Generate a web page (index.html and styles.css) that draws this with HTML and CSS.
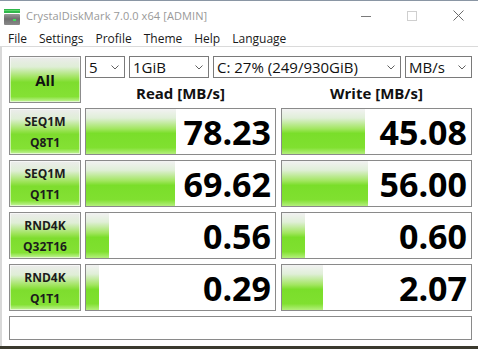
FILE: index.html
```html
<!DOCTYPE html>
<html lang="en">
<head>
  <meta charset="UTF-8" />
  <title>CrystalDiskMark 7.0.0 x64 [ADMIN]</title>
  <link rel="stylesheet" href="styles.css">
</head>
<body>
  <div class="window">
    <div class="titlebar">
      <svg class="app-icon" width="16" height="16" viewBox="0 0 16 16">
        <defs>
          <linearGradient id="drive" x1="0" y1="0" x2="0" y2="1">
            <stop offset="0" stop-color="#9a9a9a"/>
            <stop offset="0.45" stop-color="#6e6e6e"/>
            <stop offset="1" stop-color="#8a8a8a"/>
          </linearGradient>
        </defs>
        <rect x="0" y="0" width="16" height="4" fill="#2fb84a"/>
        <rect x="0" y="1" width="16" height="1" fill="#5fd46e"/>
        <rect x="0" y="5" width="16" height="11" rx="1" fill="url(#drive)"/>
        <rect x="9" y="10" width="3" height="2" fill="#3ee05a"/>
      </svg>
      <span class="title">CrystalDiskMark 7.0.0 x64 [ADMIN]</span>
      <div class="controls">
        <span class="ctl">
          <svg width="10" height="10" viewBox="0 0 10 10"><line x1="0" y1="5.5" x2="10" y2="5.5" stroke="#7a7a7a"/></svg>
        </span>
        <span class="ctl">
          <svg width="10" height="10" viewBox="0 0 10 10"><rect x="0.5" y="0.5" width="9" height="9" fill="none" stroke="#cfcfcf"/></svg>
        </span>
        <span class="ctl">
          <svg width="11" height="11" viewBox="0 0 11 11"><path d="M0.5 0.5 L10.5 10.5 M10.5 0.5 L0.5 10.5" stroke="#6a6a6a" fill="none"/></svg>
        </span>
      </div>
    </div>

    <nav class="menu">
      <span>File</span>
      <span>Settings</span>
      <span>Profile</span>
      <span>Theme</span>
      <span>Help</span>
      <span>Language</span>
    </nav>

    <main class="client">
      <div class="board">
        <div class="label all">All</div>
        <div class="settings">
          <div class="combos">
            <div class="combo count">5<svg class="chev" width="8" height="5" viewBox="0 0 8 5"><polyline points="0.5,0.5 4,4 7.5,0.5" fill="none" stroke="#606060"/></svg></div>
            <div class="combo size">1GiB<svg class="chev" width="8" height="5" viewBox="0 0 8 5"><polyline points="0.5,0.5 4,4 7.5,0.5" fill="none" stroke="#606060"/></svg></div>
            <div class="combo drive">C: 27% (249/930GiB)<svg class="chev" width="8" height="5" viewBox="0 0 8 5"><polyline points="0.5,0.5 4,4 7.5,0.5" fill="none" stroke="#606060"/></svg></div>
            <div class="combo unit">MB/s<svg class="chev" width="8" height="5" viewBox="0 0 8 5"><polyline points="0.5,0.5 4,4 7.5,0.5" fill="none" stroke="#606060"/></svg></div>
          </div>
          <div class="heads">
            <span>Read [MB/s]</span>
            <span>Write [MB/s]</span>
          </div>
        </div>

        <div class="label">SEQ1M<br>Q8T1</div>
        <div class="cell"><div class="bar" style="width: 90px"></div><span class="value">78.23</span></div>
        <div class="cell write"><div class="bar" style="width: 83px"></div><span class="value">45.08</span></div>

        <div class="label">SEQ1M<br>Q1T1</div>
        <div class="cell"><div class="bar" style="width: 89px"></div><span class="value">69.62</span></div>
        <div class="cell write"><div class="bar" style="width: 86px"></div><span class="value">56.00</span></div>

        <div class="label">RND4K<br>Q32T16</div>
        <div class="cell"><div class="bar" style="width: 23px"></div><span class="value">0.56</span></div>
        <div class="cell write"><div class="bar" style="width: 23px"></div><span class="value">0.60</span></div>

        <div class="label">RND4K<br>Q1T1</div>
        <div class="cell"><div class="bar" style="width: 13px"></div><span class="value">0.29</span></div>
        <div class="cell write"><div class="bar" style="width: 41px"></div><span class="value">2.07</span></div>
      </div>
      <div class="status"></div>
    </main>
  </div>
</body>
</html>
```

FILE: styles.css
```css
* {
  box-sizing: border-box;
}

body {
  margin: 0;
  height: 100vh;
  overflow: hidden;
  background: #3b3a2e;
  font-family: 'Open Sans', sans-serif;
}

.window {
  width: 481px;
  margin-top: 1px;
  background: #fff;
}

body::before {
  content: '';
  position: absolute;
  top: 0;
  left: 0;
  right: 0;
  height: 1px;
  background: #8a96a4;
}

/* title bar */
.titlebar {
  height: 29px;
  display: flex;
  align-items: center;
  padding-left: 4px;
}

.app-icon {
  margin-top: 2px;
  flex: none;
}

.title {
  margin-left: 6px;
  font-size: 11px;
  color: #999;
  letter-spacing: 0.1px;
}

.controls {
  margin-left: auto;
  display: flex;
  height: 100%;
}

.ctl {
  width: 46px;
  display: flex;
  align-items: center;
  justify-content: center;
}

/* menu */
.menu {
  height: 17px;
  display: flex;
  align-items: center;
  padding-left: 2px;
  font-size: 12px;
  color: #1a1a1a;
  border-bottom: 1px solid #dadada;
}

.menu span {
  padding: 0 6px;
}

/* client area */
.client {
  border-left: 2px solid #d8d8d8;
  padding: 9px 0 6px 7px;
}

.board {
  display: grid;
  grid-template-columns: 72px 191px 192px;
  grid-auto-rows: 47px;
  column-gap: 4px;
  row-gap: 5px;
}

.label {
  border: 1px solid #8c8c8c;
  box-shadow: inset 0 0 0 1px rgba(255, 255, 255, 0.55);
  background: linear-gradient(#ececec 0%, #dfeed6 22%, #9ee45a 46%, #7edd2e 56%, #84e134 88%, #c6f49e 100%);
  display: flex;
  align-items: center;
  justify-content: center;
  text-align: center;
  font-size: 12px;
  font-weight: bold;
  line-height: 21px;
  color: #1c1c1c;
}

.label.all {
  font-size: 15px;
  color: #111;
  padding-top: 1px;
}

.settings {
  grid-column: 2 / 4;
  display: flex;
  flex-direction: column;
}

.combos {
  display: flex;
  gap: 4px;
  height: 26px;
}

.combo {
  border: 1px solid #7a7a7a;
  background: #fff;
  display: flex;
  align-items: center;
  justify-content: space-between;
  padding: 0 5px 0 3px;
  font-size: 15px;
  color: #111;
}

.count { width: 40px; }
.size { width: 80px; }
.drive { width: 188px; }
.unit { width: 67px; }

.heads {
  flex: 1;
  display: grid;
  grid-template-columns: 191px 192px;
  column-gap: 4px;
  align-items: center;
  font-size: 15px;
  font-weight: bold;
  color: #111;
  text-align: center;
  padding-top: 5px;
}

.heads span:last-child {
  margin-left: 1px;
}

.cell {
  position: relative;
  border: 1px solid #8a8a8a;
  background: #fff;
  display: flex;
  align-items: center;
  justify-content: flex-end;
  padding-right: 4px;
}

.cell.write {
  margin-left: 1px;
}

.bar {
  position: absolute;
  top: 0;
  bottom: 0;
  left: 0;
  background: linear-gradient(#f2f2f2 0%, #e0efd8 20%, #a2e660 44%, #7ade2a 54%, #80e030 86%, #b4ef7c 100%);
}

.value {
  position: relative;
  font-size: 34px;
  font-weight: bold;
  color: #000;
  line-height: 1;
  margin-top: 1px;
}

.status {
  margin-top: 5px;
  width: 463px;
  height: 24px;
  border: 1px solid #8a8a8a;
  background: #fff;
}
```
